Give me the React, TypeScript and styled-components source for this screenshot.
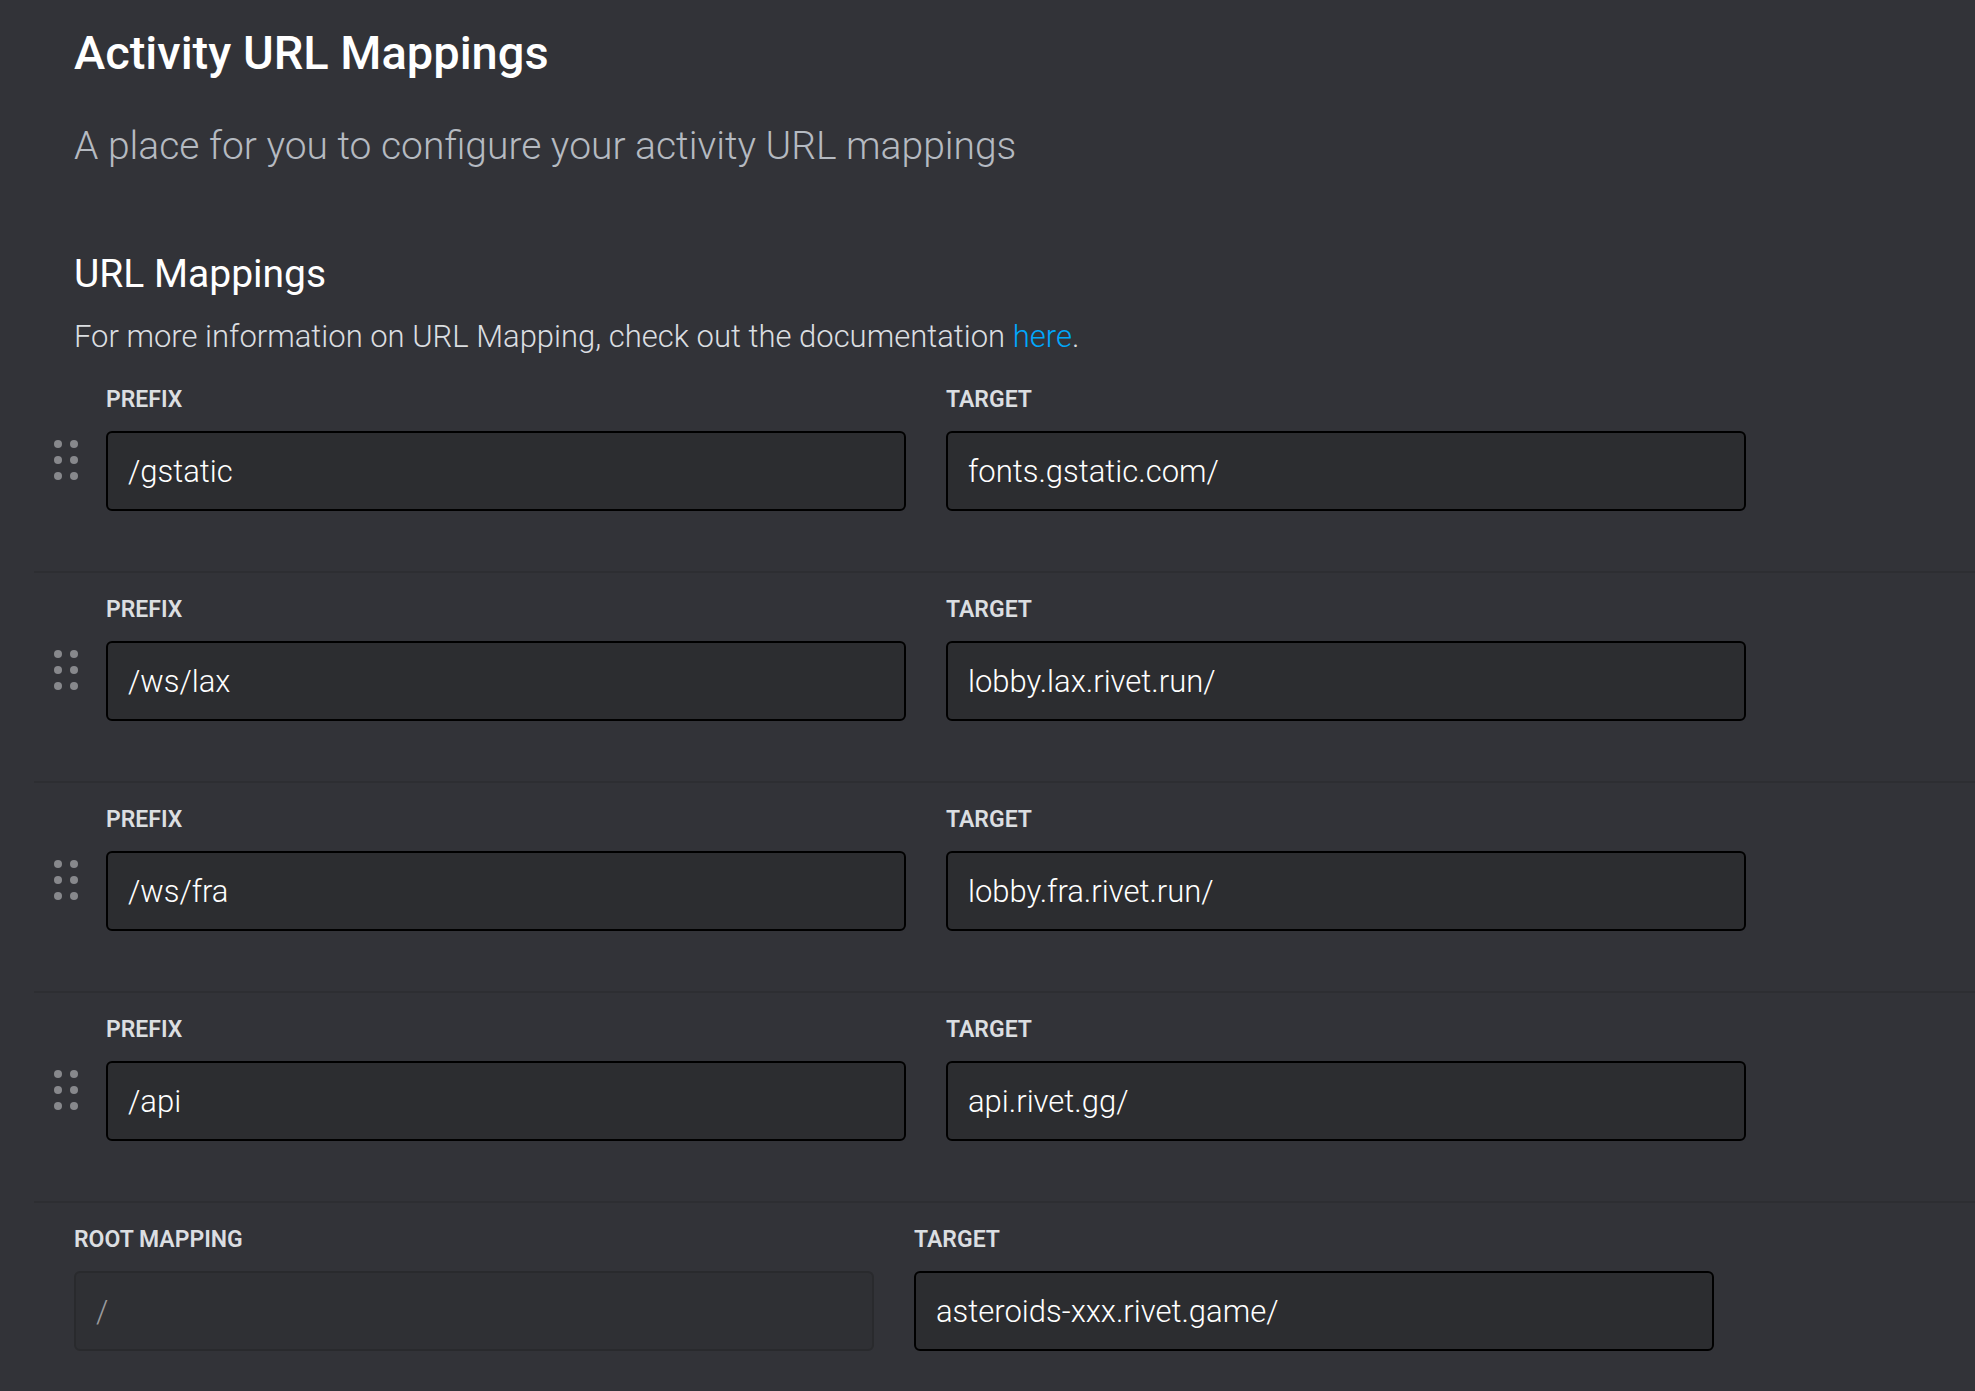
import React, { useId, useState } from "react";
import styled, { createGlobalStyle, ThemeProvider } from "styled-components";

const theme = {
  background: "#323338",
  inputBackground: "#2c2d30",
  inputBorder: "#000000",
  disabledBackground: "#2f3034",
  disabledBorder: "#292a2d",
  divider: "#2d2e32",
  heading: "#ffffff",
  text: "#dbdee1",
  muted: "#b5bac1",
  disabledText: "#9a9b9d",
  handle: "#87888c",
  link: "#00a8fc",
  font: `Roboto, "Liberation Sans", sans-serif`,
};

const GlobalStyle = createGlobalStyle`
  *, *::before, *::after {
    box-sizing: border-box;
  }

  body {
    margin: 0;
    background: ${theme.background};
    color: ${theme.text};
    font-family: ${theme.font};
  }
`;

const Page = styled.main`
  display: flex;
  flex-direction: column;
  padding: 24px 0 40px 34px;
`;

const Intro = styled.header`
  padding-left: 40px;
`;

const Title = styled.h1`
  margin: 0 0 38px;
  color: ${({ theme }) => theme.heading};
  font-size: 47px;
  font-weight: 500;
  line-height: 58px;
`;

const Subtitle = styled.p`
  margin: 0;
  color: ${({ theme }) => theme.muted};
  font-size: 39px;
  font-weight: 300;
  line-height: 52px;
`;

const SectionIntro = styled.div`
  padding: 78px 0 6px 40px;
`;

const SectionTitle = styled.h2`
  margin: 0 0 19px;
  color: ${({ theme }) => theme.heading};
  font-size: 39px;
  font-weight: 400;
  line-height: 48px;
`;

const Description = styled.p`
  margin: 0;
  font-size: 31px;
  font-weight: 300;
  line-height: 40px;
`;

const Link = styled.a`
  color: ${({ theme }) => theme.link};
  text-decoration: none;

  &:hover {
    text-decoration: underline;
  }
`;

const MappingList = styled.ul`
  margin: 0;
  padding: 0;
  list-style: none;
`;

const MappingRow = styled.li`
  display: flex;
  align-items: flex-start;
  gap: 28px;
  padding: 20px 0 60px 20px;
  border-bottom: 2px solid ${({ theme }) => theme.divider};
`;

const RootRow = styled.div`
  display: flex;
  padding: 20px 0 0 40px;
`;

const DragHandle = styled.button`
  display: flex;
  flex: none;
  margin: 57px 0 0;
  padding: 0;
  border: 0;
  background: none;
  color: ${({ theme }) => theme.handle};
  cursor: grab;
`;

const Fields = styled.div`
  display: grid;
  flex: 1;
  grid-template-columns: repeat(2, minmax(0, 1fr));
  gap: 40px;
  max-width: 1640px;
`;

const FieldBox = styled.div`
  display: flex;
  flex-direction: column;
  gap: 14px;
`;

const Label = styled.label`
  font-size: 23px;
  font-weight: 600;
  line-height: 34px;
  text-transform: uppercase;
`;

const Input = styled.input`
  width: 100%;
  height: 80px;
  padding: 0 20px;
  border: 2px solid ${({ theme }) => theme.inputBorder};
  border-radius: 6px;
  outline: 0;
  background: ${({ theme }) => theme.inputBackground};
  color: ${({ theme }) => theme.heading};
  font-family: inherit;
  font-size: 31px;
  font-weight: 300;

  &:focus {
    border-color: ${({ theme }) => theme.link};
  }

  &:disabled {
    border-color: ${({ theme }) => theme.disabledBorder};
    background: ${({ theme }) => theme.disabledBackground};
    color: ${({ theme }) => theme.disabledText};
    cursor: not-allowed;
  }
`;

interface FieldProps {
  label: string;
  initialValue: string;
  disabled?: boolean;
}

function Field({ label, initialValue, disabled }: FieldProps) {
  const id = useId();
  const [value, setValue] = useState(initialValue);
  return (
    <FieldBox>
      <Label htmlFor={id}>{label}</Label>
      <Input
        id={id}
        type="text"
        spellCheck={false}
        disabled={disabled}
        value={value}
        onChange={(event) => setValue(event.target.value)}
      />
    </FieldBox>
  );
}

function GripIcon() {
  return (
    <svg width="24" height="40" viewBox="0 0 24 40" fill="currentColor" aria-hidden="true">
      {[4, 20, 36].map((cy) => (
        <React.Fragment key={cy}>
          <circle cx="4" cy={cy} r="4" />
          <circle cx="20" cy={cy} r="4" />
        </React.Fragment>
      ))}
    </svg>
  );
}

const mappings = [
  { prefix: "/gstatic", target: "fonts.gstatic.com/" },
  { prefix: "/ws/lax", target: "lobby.lax.rivet.run/" },
  { prefix: "/ws/fra", target: "lobby.fra.rivet.run/" },
  { prefix: "/api", target: "api.rivet.gg/" },
];

export default function App() {
  return (
    <ThemeProvider theme={theme}>
      <GlobalStyle />
      <Page>
        <Intro>
          <Title>Activity URL Mappings</Title>
          <Subtitle>A place for you to configure your activity URL mappings</Subtitle>
        </Intro>
        <section>
          <SectionIntro>
            <SectionTitle>URL Mappings</SectionTitle>
            <Description>
              For more information on URL Mapping, check out the documentation{" "}
              <Link href="#documentation">here</Link>.
            </Description>
          </SectionIntro>
          <MappingList>
            {mappings.map(({ prefix, target }) => (
              <MappingRow key={prefix}>
                <DragHandle type="button" aria-label="Reorder mapping">
                  <GripIcon />
                </DragHandle>
                <Fields>
                  <Field label="Prefix" initialValue={prefix} />
                  <Field label="Target" initialValue={target} />
                </Fields>
              </MappingRow>
            ))}
          </MappingList>
          <RootRow>
            <Fields>
              <Field label="Root Mapping" initialValue="/" disabled />
              <Field label="Target" initialValue="asteroids-xxx.rivet.game/" />
            </Fields>
          </RootRow>
        </section>
      </Page>
    </ThemeProvider>
  );
}
